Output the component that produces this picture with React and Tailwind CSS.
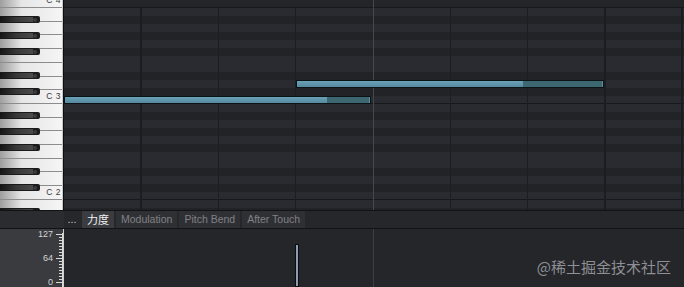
import React from "react";

const ROW = 8;
const BLACK = [1, 3, 6, 8, 10];
const rows = Array.from({ length: 27 }, (_, i) => {
  const pc = (12 - (i % 12)) % 12;
  return { black: BLACK.includes(pc), isC: pc === 0 };
});
const WHITE_NAMES = ["C", "B", "A", "G", "F", "E", "D"];
const whiteKeys = Array.from({ length: 17 }, (_, i) => {
  const name = WHITE_NAMES[i % 7];
  const octave = 4 - Math.floor(i / 7);
  return { name, label: name === "C" ? `C ${octave}` : null };
});
const blackKeyRows = rows
  .map((r, i) => (r.black ? i : null))
  .filter((v) => v !== null);
const BEAT = 77.3;
const beats = [1, 2, 3, 5, 6, 7, 8];

function Note({ top, left, width, head }) {
  return (
    <div
      className="absolute h-[8px] border border-[#0b1317] flex"
      style={{ top, left, width }}
    >
      <div
        className="h-full bg-linear-to-b from-[#6aa2b6] to-[#5689a0]"
        style={{ width: head }}
      />
      <div className="flex-1 h-full bg-[#3e6871] border-r border-[#5d8d98]" />
    </div>
  );
}

function Ruler() {
  const ticks = [];
  for (let y = 5; y <= 53; y += 3) {
    const major = y === 5 || y === 29 || y === 53;
    ticks.push(
      <line key={y} x1={major ? 1 : 4} y1={y + 0.5} x2={8} y2={y + 0.5} stroke="#d8d8d8" strokeWidth="1" />
    );
  }
  return (
    <svg className="absolute right-0 top-0" width="8" height="58" viewBox="0 0 8 58">
      <line x1="7.5" y1="4" x2="7.5" y2="58" stroke="#d8d8d8" strokeWidth="1" />
      {ticks}
    </svg>
  );
}

export default function App() {
  return (
    <div className="w-[684px] h-[287px] overflow-hidden flex flex-col bg-[#26272b] relative font-['Liberation_Sans',Arial,sans-serif]">
      {/* piano roll */}
      <div className="flex h-[210px] shrink-0">
        <div className="relative w-[62px] h-full overflow-hidden bg-[#f0f0f0]">
          <div className="flex flex-col mt-[-5.714px]">
            {whiteKeys.map((k, i) => (
              <div
                key={i}
                className="h-[13.714px] shrink-0 border-b border-[#8c8c8c] bg-linear-to-r from-[#9e9e9e] via-[#e6e6e6] via-35% to-[#f5f5f5] flex items-center justify-end pr-[1px]"
              >
                {k.label && (
                  <span className="text-[8.5px] leading-[9px] text-[#3a3a3a] tracking-[0.5px]">
                    {k.label}
                  </span>
                )}
              </div>
            ))}
          </div>
          {blackKeyRows.map((r) => (
            <div
              key={r}
              className="absolute left-0 h-[7px] w-[40px] flex"
              style={{ top: r * ROW }}
            >
              <div className="w-[33px] h-full bg-linear-to-r from-[#141414] via-[#383838] to-[#4a4a4a] border-y border-[#1a1a1a]" />
              <div className="w-[7px] h-full bg-[#1c1c1c] rounded-r-[2px] flex items-center">
                <div className="w-[4px] h-[4px] rounded-full bg-[#3c3c3c]" />
              </div>
            </div>
          ))}
        </div>
        <div className="w-[1px] h-full bg-[#c8c8c8]" />
        <div className="w-[1px] h-full bg-[#0e0e10]" />
        <div className="relative flex-1 h-full overflow-hidden">
          {rows.map((r, i) => (
            <div
              key={i}
              className={`h-[8px] ${i === 0 ? "bg-[#242529]" : r.black ? "bg-[#222327]" : "bg-[#2a2b30]"} ${r.isC ? "border-b border-[#17181b]" : ""}`}
            />
          ))}
          {beats.map((b) => (
            <div
              key={b}
              className="absolute top-[8px] bottom-0 w-[1.5px] bg-[#1c1d20]"
              style={{ left: b * BEAT - 1 }}
            />
          ))}
          <div className="absolute top-0 bottom-0 w-[1px] bg-[#46474c]" style={{ left: 4 * BEAT }} />
          <Note top={80} left={232} width={308} head={226} />
          <Note top={96} left={0} width={307} head={262} />
        </div>
      </div>
      <div className="h-[1px] bg-[#111214] shrink-0" />
      {/* tab bar */}
      <div className="flex h-[17px] shrink-0">
        <div className="w-[64px] h-full bg-[#2b2c30]" />
        <div className="flex-1 h-full bg-[#26272b] flex items-stretch gap-[2px] text-[10.5px] leading-[17px]">
          <div className="w-[16px] text-[#c8c8c8] text-center">...</div>
          <div className="px-[5px] bg-[#3b3c40] text-[#f0f0f0] font-['Noto_Sans_CJK_SC',sans-serif] text-[11px]">力度</div>
          <div className="px-[5px] bg-[#2f3034] text-[#808186]">Modulation</div>
          <div className="px-[5px] bg-[#2f3034] text-[#808186]">Pitch Bend</div>
          <div className="px-[5px] bg-[#2f3034] text-[#808186]">After Touch</div>
        </div>
      </div>
      <div className="h-[1px] bg-[#111214] shrink-0" />
      {/* velocity pane */}
      <div className="flex h-[58px] shrink-0">
        <div className="relative w-[63px] h-full bg-[#3a3b3f]">
          <div className="flex flex-col justify-between items-end h-full pt-[1px] pb-[0.5px] pr-[10px] text-[9px] leading-[9px] text-[#d4d4d4]">
            <span>127</span>
            <span>64</span>
            <span>0</span>
          </div>
          <Ruler />
        </div>
        <div className="w-[1px] h-full bg-[#d0d0d0]" />
        <div className="relative flex-1 h-full bg-[#25262a]">
          <div className="absolute top-0 bottom-0 w-[1px] bg-[#3e3f44]" style={{ left: 4 * BEAT }} />
          <div className="absolute bottom-0 left-[231px] top-[15px] w-[4px] bg-[#8d9eb3] border border-[#0c0d10]" />
        </div>
      </div>
      <div className="absolute right-[13px] bottom-[10px] text-[15px] leading-[20px] text-[#8e8f94] font-['Noto_Sans_CJK_SC',sans-serif]">
        @稀土掘金技术社区
      </div>
    </div>
  );
}
